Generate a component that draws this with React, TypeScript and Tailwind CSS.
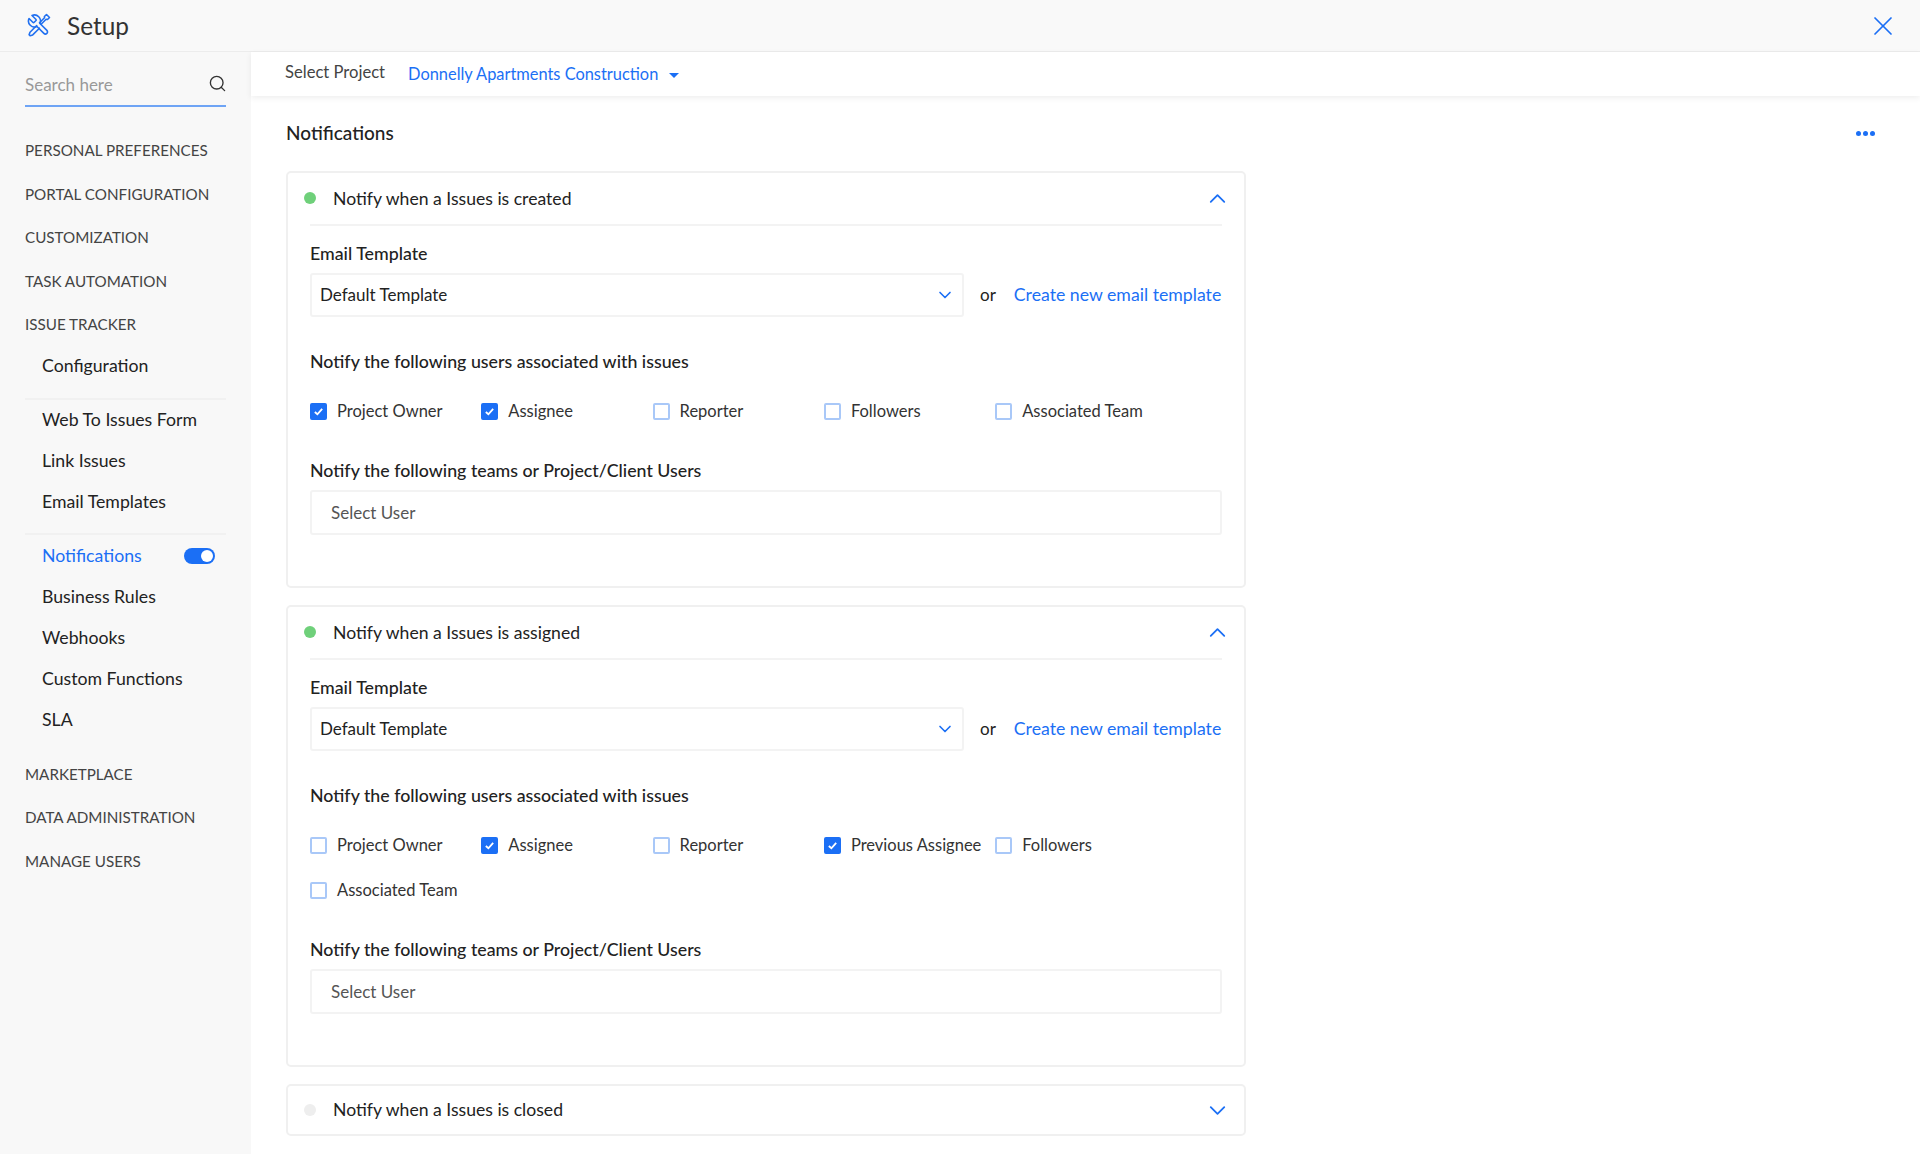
import React from "react";
import { ChevronDown, ChevronUp, Search, X } from "lucide-react";

const BLUE = "text-[#1b6ff5]";

function SetupIcon() {
  return (
    <svg width="24" height="24" viewBox="0 0 24 24" fill="none" stroke="#2170f0" strokeWidth="1.6" strokeLinejoin="round" strokeLinecap="round">
      <g transform="translate(24 0) scale(-1 1)">
        <path d="M14.7 6.3a1 1 0 0 0 0 1.4l1.6 1.6a1 1 0 0 0 1.4 0l3.77-3.77a6 6 0 0 1-7.94 7.94l-6.91 6.91a2.12 2.12 0 0 1-3-3l6.91-6.91a6 6 0 0 1 7.94-7.94l-3.76 3.76z" transform="translate(0.5 0)" />
      </g>
      <path d="M19.5 1.5l3 3-2 2-1.4-.2-5 5-1.6-1.6 5-5-.1-1.2Z" />
      <path d="M9.7 12.5 3 19.2l-.9 2.6 1 1 2.6-.9 6.7-6.7" />
    </svg>
  );
}

function Check({ label, on }: { label: string; on?: boolean }) {
  return (
    <div className="flex w-[171.3px] items-center">
      <span className={"flex h-[17px] w-[17px] shrink-0 items-center justify-center rounded-[2px] border-2 " + (on ? "border-[#1b6ff5] bg-[#1b6ff5]" : "border-[#a9c8f8] bg-white")}>
        {on && (
          <svg width="11" height="11" viewBox="0 0 12 12" fill="none" stroke="#fff" strokeWidth="2">
            <path d="M2 6.5 4.8 9 10 3.2" />
          </svg>
        )}
      </span>
      <span className="ml-[10px] whitespace-nowrap text-[16.5px] leading-5 text-[#333]">{label}</span>
    </div>
  );
}

function Card({ title, checks }: { title: string; checks: [string, boolean][] }) {
  const first = checks.slice(0, 5);
  const rest = checks.slice(5);
  return (
    <section className="mb-[17px] rounded-[5px] border-2 border-[#f0f0f0] bg-white pl-[22px] pr-[22px]">
      <div className="flex h-[53px] items-center justify-between border-b-2 border-[#f3f3f3]">
        <div className="flex items-center">
          <span className="-ml-[6px] h-3 w-3 rounded-full bg-[#6fd07a]" />
          <span className="ml-[17px] mt-[2px] text-[17.6px] text-[#222]">{title}</span>
        </div>
        <ChevronUp className={BLUE + " -mr-[8.5px]"} size={27} strokeWidth={1.6} />
      </div>
      <div className="mt-[16px] text-[17.8px] font-medium leading-[22px] text-[#222]">Email Template</div>
      <div className="mt-[9px] flex items-center">
        <div className="flex h-[44px] w-[654px] items-center justify-between rounded-[3px] border-2 border-[#f3f3f3] pl-[8px] pr-[7px]">
          <span className="text-[17px] text-[#222]">Default Template</span>
          <ChevronDown className={BLUE} size={20} strokeWidth={2} />
        </div>
        <span className="ml-[16px] text-[17px] text-[#222]">or</span>
        <a className={"ml-[18px] whitespace-nowrap text-[17.7px] " + BLUE}>Create new email template</a>
      </div>
      <div className="mt-[33px] text-[17.8px] font-medium leading-[22px] text-[#222]">Notify the following users associated with issues</div>
      <div className="mt-[29px] flex">
        {first.map(([l, o]) => (
          <Check key={l} label={l} on={o} />
        ))}
      </div>
      {rest.length > 0 && (
        <div className="mt-[25px] flex">
          {rest.map(([l, o]) => (
            <Check key={l} label={l} on={o} />
          ))}
        </div>
      )}
      <div className="mt-[38px] text-[17.8px] font-medium leading-[22px] text-[#222]">Notify the following teams or Project/Client Users</div>
      <div className="mt-[9px] mb-[51px] flex h-[45px] items-center rounded-[3px] border-2 border-[#f3f3f3] pl-[19px] text-[17px] text-[#555]">Select User</div>
    </section>
  );
}

function Group({ children }: { children: string }) {
  return <div className="flex h-[43.5px] items-center text-[15.2px] text-[#444]">{children}</div>;
}

function Sub({ children }: { children: string }) {
  return <div className="flex h-[41.2px] items-center pl-[17px] text-[17.7px] text-[#222]">{children}</div>;
}

export default function App() {
  return (
    <div className="flex h-[1154px] w-[1920px] flex-col overflow-hidden bg-white font-['Lato','Liberation_Sans',sans-serif]">
      <header className="flex h-[52px] shrink-0 items-center justify-between border-b border-[#ececec] bg-[#f9f9f9] pl-[27px] pr-[21px]">
        <div className="flex items-center">
          <SetupIcon />
          <span className="ml-[16px] mt-[2px] text-[24.4px] text-[#333]">Setup</span>
        </div>
        <X className={BLUE} size={32} strokeWidth={1.3} />
      </header>
      <div className="flex min-h-0 flex-1">
        <aside className="w-[251px] shrink-0 bg-[#f8f8f8] px-[25px]">
          <div className="mt-[11px] flex h-[44px] items-center justify-between border-b-2 border-[#6ea4f5]">
            <span className="mt-[2px] text-[17px] text-[#999]">Search here</span>
            <Search className="-mr-[1px] -mt-[1px] text-[#333]" size={19} strokeWidth={1.7} />
          </div>
          <div className="mt-[22px]">
            <Group>PERSONAL PREFERENCES</Group>
            <Group>PORTAL CONFIGURATION</Group>
            <Group>CUSTOMIZATION</Group>
            <Group>TASK AUTOMATION</Group>
            <Group>ISSUE TRACKER</Group>
          </div>
          <div className="-mt-[1px]">
            <Sub>Configuration</Sub>
            <div className="mt-[11px] border-t-2 border-[#f1f1f1]" />
            <Sub>Web To Issues Form</Sub>
            <Sub>Link Issues</Sub>
            <Sub>Email Templates</Sub>
            <div className="mt-[10px] border-t-2 border-[#f1f1f1]" />
            <div className="flex h-[41.2px] items-center justify-between pl-[17px] pr-[11px]">
              <span className={"text-[17.7px] " + BLUE}>Notifications</span>
              <span className="flex h-4 w-[31px] items-center justify-end rounded-full bg-[#1b6ff5] pr-[2px]">
                <span className="h-3 w-3 rounded-full bg-white" />
              </span>
            </div>
            <Sub>Business Rules</Sub>
            <Sub>Webhooks</Sub>
            <Sub>Custom Functions</Sub>
            <Sub>SLA</Sub>
          </div>
          <div className="mt-[11px]">
            <Group>MARKETPLACE</Group>
            <Group>DATA ADMINISTRATION</Group>
            <Group>MANAGE USERS</Group>
          </div>
        </aside>
        <main className="min-w-0 flex-1">
          <div className="flex h-[44px] items-center pl-[34px] shadow-[0_2px_6px_rgba(0,0,0,0.07)]">
            <span className="-mt-[3px] text-[16.6px] text-[#444]">Select Project</span>
            <span className={"ml-[23px] text-[16.4px] " + BLUE}>Donnelly Apartments Construction</span>
            <span className="ml-[11px] mt-[2px] h-0 w-0 border-x-[5px] border-t-[5px] border-x-transparent border-t-[#1b6ff5]" />
          </div>
          <div className="pl-[35px] pr-[30px]">
            <div className="flex h-[75px] items-center justify-between">
              <h1 className="text-[19px] font-medium text-[#222]">Notifications</h1>
              <div className="-mt-[1px] mr-[15px] flex gap-[2px]">
                <span className="h-[5px] w-[5px] rounded-full bg-[#1b6ff5]" />
                <span className="h-[5px] w-[5px] rounded-full bg-[#1b6ff5]" />
                <span className="h-[5px] w-[5px] rounded-full bg-[#1b6ff5]" />
              </div>
            </div>
            <div className="w-[960px]">
              <Card
                title="Notify when a Issues is created"
                checks={[["Project Owner", true], ["Assignee", true], ["Reporter", false], ["Followers", false], ["Associated Team", false]]}
              />
              <Card
                title="Notify when a Issues is assigned"
                checks={[["Project Owner", false], ["Assignee", true], ["Reporter", false], ["Previous Assignee", true], ["Followers", false], ["Associated Team", false]]}
              />
              <section className="flex h-[52px] items-center justify-between rounded-[5px] border-2 border-[#f0f0f0] bg-white pl-[22px] pr-[22px]">
                <div className="flex items-center">
                  <span className="-ml-[6px] h-3 w-3 rounded-full bg-[#eeeeee]" />
                  <span className="ml-[17px] mt-[1px] text-[17.6px] text-[#222]">Notify when a Issues is closed</span>
                </div>
                <ChevronDown className={BLUE + " -mr-[8.5px]"} size={27} strokeWidth={1.6} />
              </section>
            </div>
          </div>
        </main>
      </div>
    </div>
  );
}
